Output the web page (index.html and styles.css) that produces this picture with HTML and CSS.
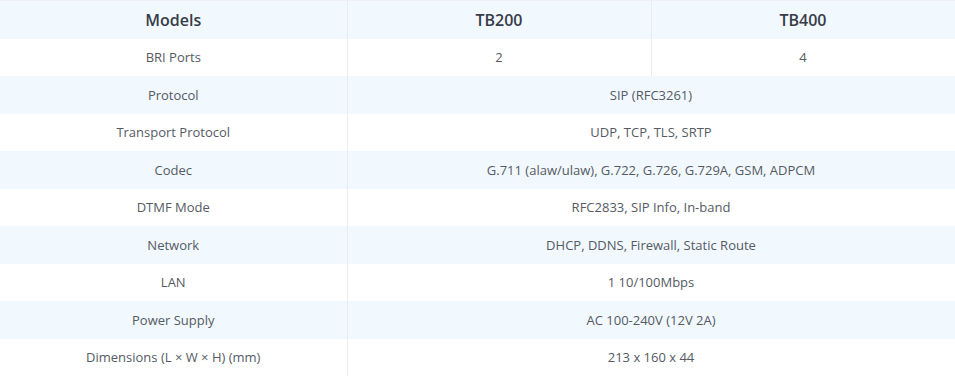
FILE: index.html
```html
<!DOCTYPE html>
<html>
<head>
<meta charset="utf-8">
<link rel="stylesheet" href="styles.css">
</head>
<body>
<table class="spec">
  <colgroup>
    <col class="c-label">
    <col class="c-val">
    <col class="c-val">
  </colgroup>
  <thead>
    <tr class="shade">
      <th>Models</th>
      <th>TB200</th>
      <th>TB400</th>
    </tr>
  </thead>
  <tbody>
    <tr><td>BRI Ports</td><td>2</td><td>4</td></tr>
    <tr class="shade"><td>Protocol</td><td colspan="2">SIP (RFC3261)</td></tr>
    <tr><td>Transport Protocol</td><td colspan="2">UDP, TCP, TLS, SRTP</td></tr>
    <tr class="shade"><td>Codec</td><td colspan="2">G.711 (alaw/ulaw), G.722, G.726, G.729A, GSM, ADPCM</td></tr>
    <tr><td>DTMF Mode</td><td colspan="2">RFC2833, SIP Info, In-band</td></tr>
    <tr class="shade"><td>Network</td><td colspan="2">DHCP, DDNS, Firewall, Static Route</td></tr>
    <tr><td>LAN</td><td colspan="2">1 10/100Mbps</td></tr>
    <tr class="shade"><td>Power Supply</td><td colspan="2">AC 100-240V (12V 2A)</td></tr>
    <tr><td>Dimensions (L × W × H) (mm)</td><td colspan="2">213 x 160 x 44</td></tr>
  </tbody>
</table>
</body>
</html>
```
FILE: styles.css
```css
html, body {
  margin: 0;
  padding: 0;
  background: #ffffff;
}
.spec {
  width: 955px;
  table-layout: fixed;
  border-collapse: collapse;
  border-top: 1px solid #eef0f3;
  font-family: "Open Sans", "Liberation Sans", sans-serif;
}
.c-label { width: 347px; }
.c-val { width: 304px; }
.spec th, .spec td {
  height: 37.5px;
  padding: 0;
  text-align: center;
  vertical-align: middle;
  border-left: 1px solid #eaecef;
  border-right: 1px solid #eaecef;
}
.spec th:first-child, .spec td:first-child {
  border-left: none;
}
.spec th {
  font-size: 16px;
  font-weight: 600;
  color: #373d48;
}
.spec td {
  font-size: 13px;
  font-weight: 400;
  color: #555a64;
}
.shade {
  background: #f1f8fe;
}
```
